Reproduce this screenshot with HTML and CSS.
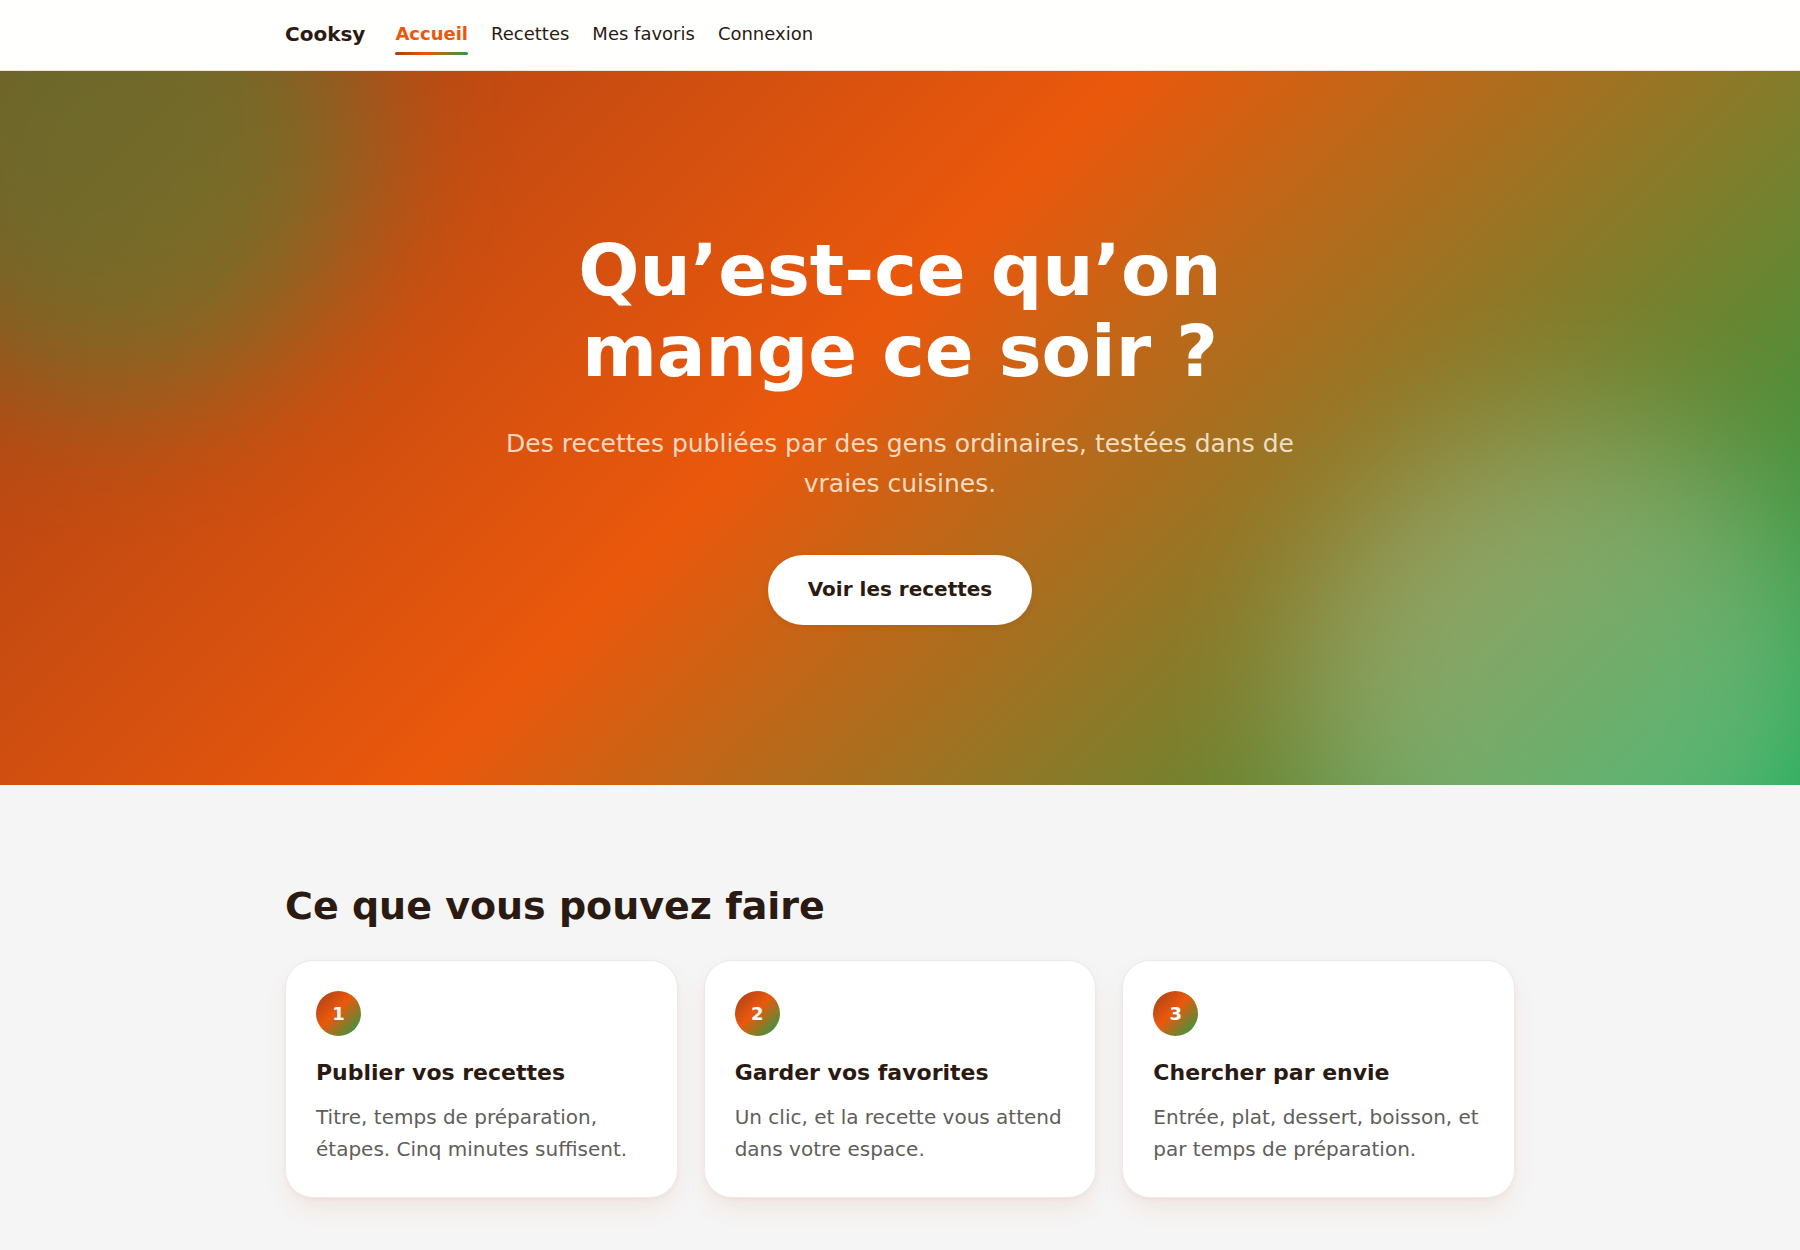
FILE: index.html
```
<!DOCTYPE html>
<html lang="fr">
<head>
    <meta charset="UTF-8">
    <meta name="viewport" content="width=device-width, initial-scale=1.0">
    <title>Cooksy</title>
    <link rel="stylesheet" href="styles.css">
</head>
<body>
    <header class="header">
        <nav class="nav container">
            <a class="logo" href="#">Cooksy</a>
            <a class="nav-link active" href="#">Accueil</a>
            <a class="nav-link" href="#">Recettes</a>
            <a class="nav-link" href="#">Mes favoris</a>
            <a class="nav-link" href="#">Connexion</a>
        </nav>
    </header>

    <main>
        <section class="hero">
            <div class="hero-content">
                <h1>Qu’est-ce qu’on mange ce soir ?</h1>
                <p>Des recettes publiées par des gens ordinaires, testées dans de vraies cuisines.</p>
                <button class="btn" type="button">Voir les recettes</button>
            </div>
        </section>

        <section class="features container">
            <h2>Ce que vous pouvez faire</h2>
            <div class="cards">
                <article class="card">
                    <span class="badge">1</span>
                    <h3>Publier vos recettes</h3>
                    <p>Titre, temps de préparation, étapes. Cinq minutes suffisent.</p>
                </article>
                <article class="card">
                    <span class="badge">2</span>
                    <h3>Garder vos favorites</h3>
                    <p>Un clic, et la recette vous attend dans votre espace.</p>
                </article>
                <article class="card">
                    <span class="badge">3</span>
                    <h3>Chercher par envie</h3>
                    <p>Entrée, plat, dessert, boisson, et par temps de préparation.</p>
                </article>
            </div>
        </section>
    </main>
</body>
</html>
```
FILE: styles.css
```
:root {
    --ink: #2a1a12;
    --muted: #5f5e5a;
    --orange: #ea580c;
    --gradient: linear-gradient(135deg, #a43f16 0%, #ea580c 45%, #16a34a 100%);
}
* {
    box-sizing: border-box;
}
body {
    margin: 0;
    background: #f5f5f5;
    color: var(--ink);
    font-family: "DejaVu Sans", sans-serif;
    font-size: 20px;
    line-height: 32px;
}
h1, h2, h3, p {
    margin: 0;
}
.container {
    max-width: 1278px;
    margin: 0 auto;
    padding: 0 24px;
}

/* Header */
.header {
    background: #fffffe;
    border-bottom: 1px solid #eee5df;
}
.nav {
    display: flex;
    align-items: center;
    gap: 23px;
    padding-top: 13px;
    padding-bottom: 15px;
}
.logo {
    margin-right: 7px;
    color: var(--ink);
    font-weight: bold;
    text-decoration: none;
}
.nav-link {
    position: relative;
    padding: 5px 0;
    color: var(--ink);
    font-size: 18px;
    text-decoration: none;
}
.nav-link.active {
    color: var(--orange);
    font-weight: bold;
}
.nav-link.active::after {
    content: "";
    position: absolute;
    left: 0;
    right: 0;
    bottom: 0;
    height: 3px;
    border-radius: 2px;
    background: var(--gradient);
}

/* Hero */
.hero {
    position: relative;
    overflow: hidden;
    padding: 159px 24px 160px;
    background: var(--gradient);
    color: #fff;
    text-align: center;
}
.hero::before,
.hero::after {
    content: "";
    position: absolute;
    border-radius: 50%;
    filter: blur(72px);
}
.hero::before {
    top: -170px;
    left: -130px;
    width: 500px;
    height: 500px;
    background: #16a34a;
    opacity: 0.4;
}
.hero::after {
    right: -40px;
    bottom: -180px;
    width: 540px;
    height: 540px;
    background: #fff;
    opacity: 0.24;
}
.hero-content {
    position: relative;
    z-index: 1;
    max-width: 800px;
    margin: 0 auto;
}
.hero h1 {
    max-width: 700px;
    margin: 0 auto 32px;
    font-size: 72px;
    line-height: 81px;
}
.hero p {
    margin-bottom: 51px;
    color: rgba(255, 248, 235, 0.82);
    font-size: 25px;
    line-height: 40px;
}
.btn {
    display: block;
    margin: 0 auto;
    padding: 18px 40px 20px;
    border: none;
    border-radius: 99px;
    background: #fff;
    color: var(--ink);
    font: bold 20px/32px "DejaVu Sans", sans-serif;
    box-shadow: 0 2px 6px rgba(80, 30, 10, 0.1);
    cursor: pointer;
}

/* Features */
.features {
    padding-top: 96px;
    padding-bottom: 96px;
}
.features h2 {
    margin-bottom: 29px;
    font-size: 38px;
    line-height: 50px;
}
.cards {
    display: grid;
    grid-template-columns: repeat(3, 1fr);
    gap: 26px;
}
.card {
    padding: 30px 30px 32px;
    border: 1px solid #eceae8;
    border-radius: 28px;
    background: #fff;
    box-shadow: 0 2px 4px rgba(154, 52, 18, 0.04), 0 12px 26px -4px rgba(194, 80, 18, 0.1);
}
.badge {
    display: flex;
    align-items: center;
    justify-content: center;
    width: 45px;
    height: 45px;
    margin-bottom: 20px;
    border-radius: 50%;
    background: var(--gradient);
    color: #fff;
    font-size: 18px;
    font-weight: bold;
}
.card h3 {
    margin-bottom: 11px;
    font-size: 22px;
    line-height: 34px;
}
.card p {
    color: var(--muted);
}
@media (max-width: 900px) {
    .cards {
        grid-template-columns: 1fr;
    }
}
```
